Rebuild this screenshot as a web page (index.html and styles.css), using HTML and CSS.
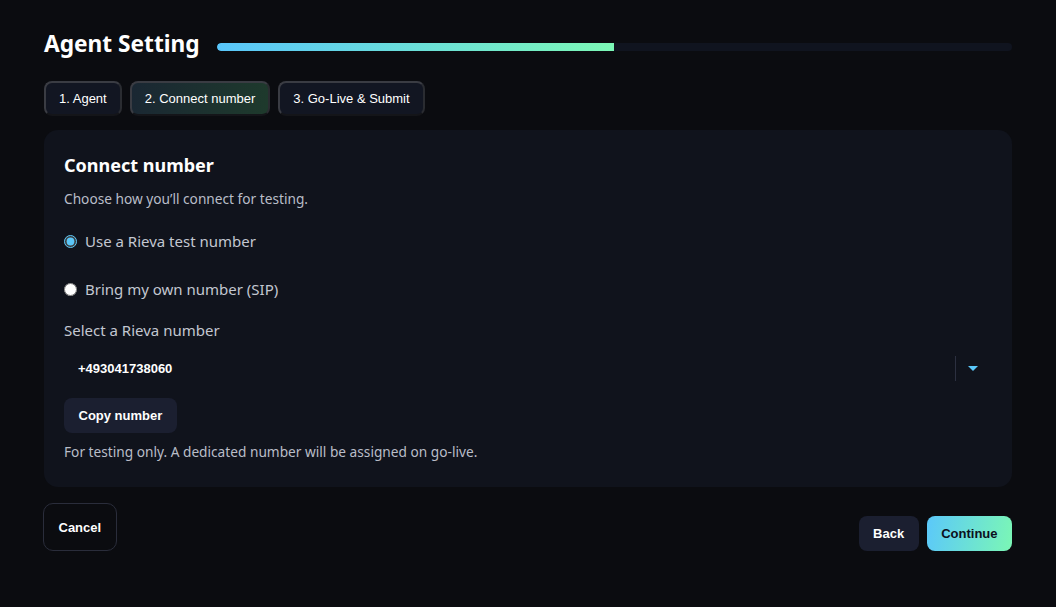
FILE: index.html
```html
<!DOCTYPE html>
<html lang="en">
<head>
<meta charset="utf-8">
<title>Agent Setting</title>
<link rel="stylesheet" href="styles.css">
</head>
<body>
<div class="page">
  <header class="head">
    <h1 class="title">Agent Setting</h1>
    <div class="progress"><div class="progress-fill" style="width: 50%"></div></div>
  </header>

  <nav class="tabs">
    <button class="tab">1. Agent</button>
    <button class="tab tab-active">2. Connect number</button>
    <button class="tab">3. Go-Live &amp; Submit</button>
  </nav>

  <section class="card">
    <h2 class="card-title">Connect number</h2>
    <p class="card-sub">Choose how you’ll connect for testing.</p>

    <label class="radio-row"><input type="radio" name="mode" checked><span>Use a Rieva test number</span></label>
    <label class="radio-row"><input type="radio" name="mode"><span>Bring my own number (SIP)</span></label>

    <div class="field-label">Select a Rieva number</div>
    <div class="select">
      <span class="select-value">+493041738060</span>
      <span class="select-sep"></span>
      <span class="select-arrow"></span>
    </div>

    <button class="btn btn-dark">Copy number</button>
    <p class="note">For testing only. A dedicated number will be assigned on go-live.</p>
  </section>

  <footer class="foot">
    <button class="btn btn-outline">Cancel</button>
    <div class="foot-right">
      <button class="btn btn-dark">Back</button>
      <button class="btn btn-grad">Continue</button>
    </div>
  </footer>
</div>
</body>
</html>
```

FILE: styles.css
```css
* { box-sizing: border-box; }
html, body { margin: 0; background: #0b0c10; }
body {
  font-family: "Noto Sans", "Open Sans", sans-serif;
  color: #ffffff;
}
.page { padding: 27px 44px 0 44px; }

.head { display: flex; align-items: center; gap: 17px; height: 32px; }
.title { margin: 0; font-size: 22.7px; font-weight: 700; white-space: nowrap; }
.progress { flex: 1; height: 8px; margin-top: 7px; border-radius: 4px; background: #10141f; overflow: hidden; }
.progress-fill { height: 100%; background: linear-gradient(90deg, #59c6fb, #7cf8b6); border-radius: 4px 0 0 4px; }

.tabs { display: flex; gap: 8px; margin-top: 22px; }
.tab {
  font-family: "Liberation Sans", Arial, sans-serif;
  font-size: 13px;
  color: #fff;
  background: #121622;
  border: 2px solid #3a3c43;
  border-bottom-color: #141519;
  border-right-color: #2a2c31;
  border-radius: 8px;
  padding: 8px 13px;
  line-height: 15px;
  height: 35px;
}
.tab-active { background: linear-gradient(100deg, #1a2733, #1e3a2c); }

.card {
  margin-top: 14px;
  background: #10131c;
  border-radius: 14px;
  padding: 22px 20px 25px 20px;
}
.card-title { margin: 0; font-size: 18px; font-weight: 700; line-height: 26px; }
.card-sub { margin: 12px 0 0; font-size: 13.7px; color: #b9bdc8; line-height: 18px; }

.radio-row { display: flex; align-items: center; gap: 8px; margin-top: 22px; height: 22px; font-size: 15px; color: #c3c7d1; }
.radio-row + .radio-row { margin-top: 26px; }
.radio-row input { margin: 0; width: 13px; height: 13px; accent-color: #5bc6f8; }

.field-label { margin-top: 19px; font-size: 15px; color: #c3c7d1; line-height: 22px; }

.select { display: flex; align-items: center; height: 36px; margin-top: 9px; padding-left: 14px; }
.select-value { flex: 1; font-family: "Liberation Sans", Arial, sans-serif; font-weight: 700; font-size: 13px; }
.select-sep { width: 1px; height: 25px; background: #2c3040; }
.select-arrow { width: 0; height: 0; margin: 0 14px 0 12px; border-left: 5px solid transparent; border-right: 5px solid transparent; border-top: 5px solid #5ac8fa; }

.btn {
  font-family: "Liberation Sans", Arial, sans-serif;
  font-weight: 700;
  font-size: 13px;
  line-height: 15px;
  color: #fff;
  border: 0;
  border-radius: 8px;
  padding: 10px 14.5px;
  height: 35px;
}
.card .btn-dark { margin-top: 12px; }
.btn-dark { background: #1b1f30; }
.note { margin: 9px 0 0; font-size: 13.7px; color: #b9bdc8; line-height: 20px; }

.foot { display: flex; justify-content: space-between; align-items: flex-end; margin-top: 16px; }
.btn-outline { background: transparent; border: 1px solid #2a2d3b; border-radius: 10px; height: 48px; padding: 0 14.5px; margin-left: -1px; }
.foot-right { display: flex; gap: 8px; }
.btn-grad { background: linear-gradient(100deg, #5bc8fa, #7bf7b5); color: #0c1020; }
```
